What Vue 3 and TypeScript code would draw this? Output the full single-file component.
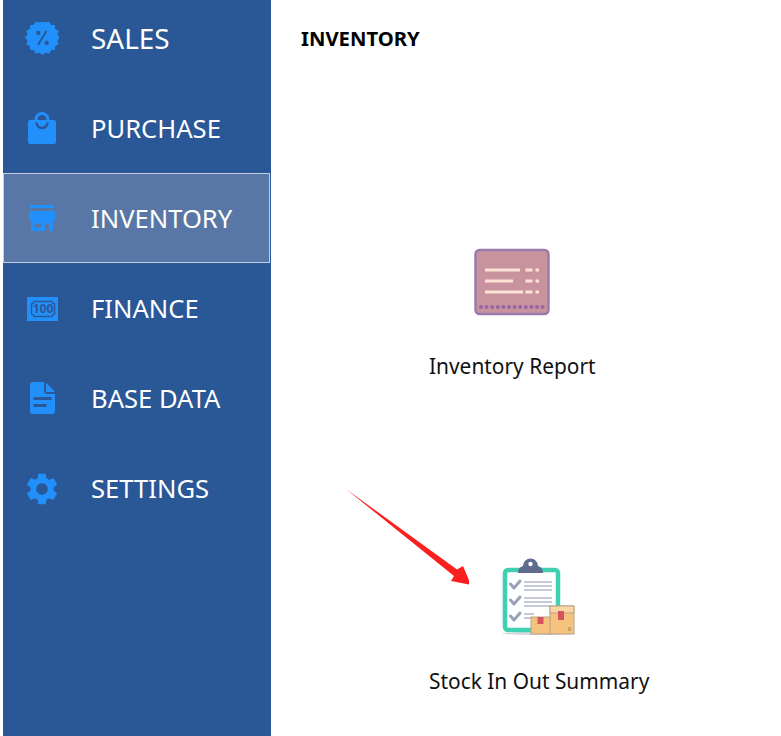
<template>
  <div class="page">
    <aside class="sidebar">
      <ul class="menu">
        <li
          v-for="item in menu"
          :key="item.label"
          :class="['menu-item', { active: item.label === activeItem, large: item.label === 'SALES' }]"
        >
          <svg class="menu-icon" :viewBox="item.box" width="34" height="34">
            <path class="icon-fill" :d="item.fill" />
            <path v-if="item.detail" class="icon-detail" :d="item.detail" :stroke-width="item.detailWidth" />
            <text v-if="item.label === 'FINANCE'" class="icon-text" x="18" y="21">100</text>
          </svg>
          <span>{{ item.label }}</span>
        </li>
      </ul>
    </aside>

    <main class="content">
      <h1 class="title">INVENTORY</h1>

      <div class="tiles">
        <div class="tile">
          <svg class="tile-icon" viewBox="0 0 80 80" width="80" height="80">
            <rect x="3.5" y="8" width="73" height="64" rx="4" fill="#c9929f" stroke="#9a7aab" stroke-width="2.4" />
            <g stroke="#fde3d5" stroke-width="3">
              <path d="M13 28h35M13 39h28M13 50h38" />
              <path d="M53.5 28h7M53.5 39h7M53.5 50h7M63.5 28h3.500M63.5 39h3.500M63.5 50h3.500" />
            </g>
            <circle v-for="n in 12" :key="n" :cx="9 + (n - 1) * 5.6" cy="65" r="2" fill="#96689f" />
          </svg>
          <span>Inventory Report</span>
        </div>

        <div class="tile">
          <svg class="tile-icon" viewBox="0 0 80 80" width="80" height="80">
            <ellipse cx="40" cy="76.5" rx="37" ry="1.5" fill="#d6d8de" />
            <rect x="6" y="13" width="53" height="60" rx="3" fill="#fff" stroke="#3fd0b2" stroke-width="4.5" />
            <path d="M24 9a7.5 7.500 0 0 1 15 0c3 1 5 3 5 7H19c0-4 2-6 5-7z" fill="#5f6b8e" />
            <circle cx="31.5" cy="7" r="2.2" fill="#fff" />
            <g fill="none" stroke="#9aa2b8" stroke-width="3" stroke-linecap="round" stroke-linejoin="round">
              <path d="M11.500 27l3.500 4 6-7M11.500 43l3.500 4 6-7M11.500 59l3.500 4 6-7" />
            </g>
            <g stroke="#c6c9d9" stroke-width="2.2">
              <path d="M25 25h28M25 29h28M25 33h28M25 41h28M25 45h28M25 49h28M25 57h10M25 61h8" />
            </g>
            <rect x="32" y="60" width="20" height="17" fill="#f6c37f" stroke="#b6a18a" stroke-width="1" />
            <rect x="38.500" y="60" width="6" height="7" fill="#d8525f" />
            <rect x="51" y="49" width="24" height="28" fill="#f6c37f" stroke="#b6a18a" stroke-width="1" />
            <path d="M51 49h24v7H51z" fill="#f9d6a3" stroke="#b6a18a" stroke-width="1" />
            <rect x="59" y="54" width="6" height="9" fill="#d8525f" />
            <rect x="69" y="70" width="3" height="4" fill="#c9a273" />
          </svg>
          <span>Stock In Out Summary</span>
        </div>
      </div>

      <svg class="arrow" viewBox="0 0 130 100" width="130" height="100">
        <path d="M7 4L118 84.500l6-3.500 8 19-20-4 3-5z" fill="#fb1f1f" />
      </svg>
    </main>
  </div>
</template>

<script setup lang="ts">
interface MenuItem {
  label: string
  box: string
  fill: string
  detail?: string
  detailWidth?: number
}

const activeItem = 'INVENTORY'

// scalloped badge behind the percent sign
function badgePath(cx: number, cy: number, outer: number, inner: number, spikes: number): string {
  const pts: string[] = []
  for (let i = 0; i < spikes * 2; i++) {
    const r = i % 2 === 0 ? outer : inner
    const a = (Math.PI * i) / spikes
    pts.push(`${(cx + r * Math.sin(a)).toFixed(2)} ${(cy - r * Math.cos(a)).toFixed(2)}`)
  }
  return `M${pts.join('L')}z`
}

const percent =
  'M21.500 9L13 23M13.300 9.800a1.100 1.100 0 1 0 .01 0zM21.700 19.800a1.100 1.100 0 1 0 .01 0z'

const gear =
  'M19.14 12.94c.04-.3.06-.61.06-.94 0-.32-.02-.64-.07-.94l2.03-1.58a.49.49 0 0 0 .12-.61l-1.92-3.32a.488.488 0 0 0-.59-.22l-2.39.96c-.5-.38-1.03-.7-1.62-.94l-.36-2.54a.484.484 0 0 0-.48-.41h-3.84c-.24 0-.43.17-.47.41l-.36 2.54c-.59.24-1.13.57-1.62.94l-2.39-.96c-.22-.08-.47 0-.59.22L2.74 8.87c-.12.21-.08.47.12.61l2.03 1.58c-.05.3-.09.63-.09.94s.02.64.07.94l-2.03 1.58a.49.49 0 0 0-.12.61l1.92 3.32c.12.22.37.29.59.22l2.39-.96c.5.38 1.03.7 1.62.94l.36 2.54c.05.24.24.41.48.41h3.84c.24 0 .44-.17.47-.41l.36-2.54c.59-.24 1.13-.56 1.62-.94l2.39.96c.22.08.47 0 .59-.22l1.92-3.32c.12-.22.07-.47-.12-.61l-2.01-1.58zM12 15.6c-1.98 0-3.6-1.62-3.6-3.6s1.62-3.6 3.6-3.6 3.6 1.62 3.6 3.6-1.62 3.6-3.6 3.6z'

const menu: MenuItem[] = [
  {
    label: 'SALES',
    box: '0 0 34 34',
    fill: badgePath(17.5, 15.5, 17.5, 15.2, 16),
    detail: percent,
    detailWidth: 2
  },
  {
    label: 'PURCHASE',
    box: '0 0 34 34',
    fill: 'M5 8h4.500V7.500a7.500 7.500 0 0 1 15 0V8H29a2 2 0 0 1 2 2v20a2 2 0 0 1-2 2H5a2 2 0 0 1-2-2V10a2 2 0 0 1 2-2zM12.500 8h9V7.500a4.500 4.500 0 0 0-9 0z',
    detail: 'M11.500 10.500a5.500 5.500 0 0 0 11 0',
    detailWidth: 2.4
  },
  {
    label: 'INVENTORY',
    box: '0 0 34 34',
    fill: 'M5 3h24v3H5zM4 9h26v9.500H4zM6 18.500h22V29H6zM9.500 21.500v4h7v-4zM20 21.500V29h4v-7.500z'
  },
  {
    label: 'FINANCE',
    box: '0 0 34 34',
    fill: 'M2 5h31v24H2z',
    detail: 'M9 9.500h18a3 3 0 0 0 2.500 2.500v10a3 3 0 0 0-2.500 2.500H9A3 3 0 0 0 6.500 22V12A3 3 0 0 0 9 9.500z',
    detailWidth: 1.5
  },
  {
    label: 'BASE DATA',
    box: '0 0 34 34',
    fill: 'M8 0h11v9a3 3 0 0 0 3 3h8v17a3 3 0 0 1-3 3H8a3 3 0 0 1-3-3V3a3 3 0 0 1 3-3zM21 0.500L30 10h-9zM8.500 15v3h18v-3zM8.500 22v3h13v-3z'
  },
  {
    label: 'SETTINGS',
    box: '1.375 1.375 21.25 21.25',
    fill: gear
  }
]
</script>

<style scoped>
.page {
  position: relative;
  display: flex;
  width: 781px;
  height: 736px;
  overflow: hidden;
  background: #ffffff;
  font-family: "Noto Sans", "Open Sans", sans-serif;
}

.sidebar {
  width: 268px;
  height: 100%;
  margin-left: 3px;
  background: #2a5796;
  flex-shrink: 0;
}

.menu {
  list-style: none;
  margin: -6px 0 0;
  padding: 0;
}

.menu-item {
  display: flex;
  align-items: center;
  box-sizing: border-box;
  height: 90px;
  margin-right: 1px;
  padding-left: 22px;
  color: #ffffff;
  font-size: 25.6px;
}

.menu-item span {
  margin-top: -1px;
  margin-left: 32px;
}

.menu-item.large {
  font-size: 27.9px;
}

.menu-item.large span {
  margin-top: -3px;
}

.menu-item.active {
  margin-top: -1px;
  margin-bottom: 1px;
  padding-top: 2px;
  padding-left: 21px;
  background: #5877a6;
  border: 1px solid #c3cedf;
}

.menu-icon {
  flex-shrink: 0;
}

.icon-fill {
  fill: #2290fb;
  fill-rule: evenodd;
}

.icon-detail {
  fill: none;
  stroke: #2a5796;
}

.icon-text {
  fill: #2a5796;
  font-size: 12px;
  font-weight: 700;
  text-anchor: middle;
}

.content {
  flex: 1;
  padding-left: 30px;
}

.title {
  margin: 0;
  padding-top: 25px;
  line-height: 27px;
  color: #000000;
  font-size: 20.3px;
  font-weight: 700;
}

.tiles {
  display: flex;
  flex-direction: column;
  align-items: flex-start;
  gap: 177px;
  margin-top: 190px;
  margin-left: 128px;
}

.tile {
  display: flex;
  flex-direction: column;
  align-items: center;
  gap: 30px;
  color: #111111;
  font-size: 20.9px;
  line-height: 28px;
}

/* the reference icons are soft, scaled-up bitmaps */
.tile-icon {
  display: block;
  filter: blur(0.5px);
}

.arrow {
  position: absolute;
  left: 339px;
  top: 485px;
}
</style>
